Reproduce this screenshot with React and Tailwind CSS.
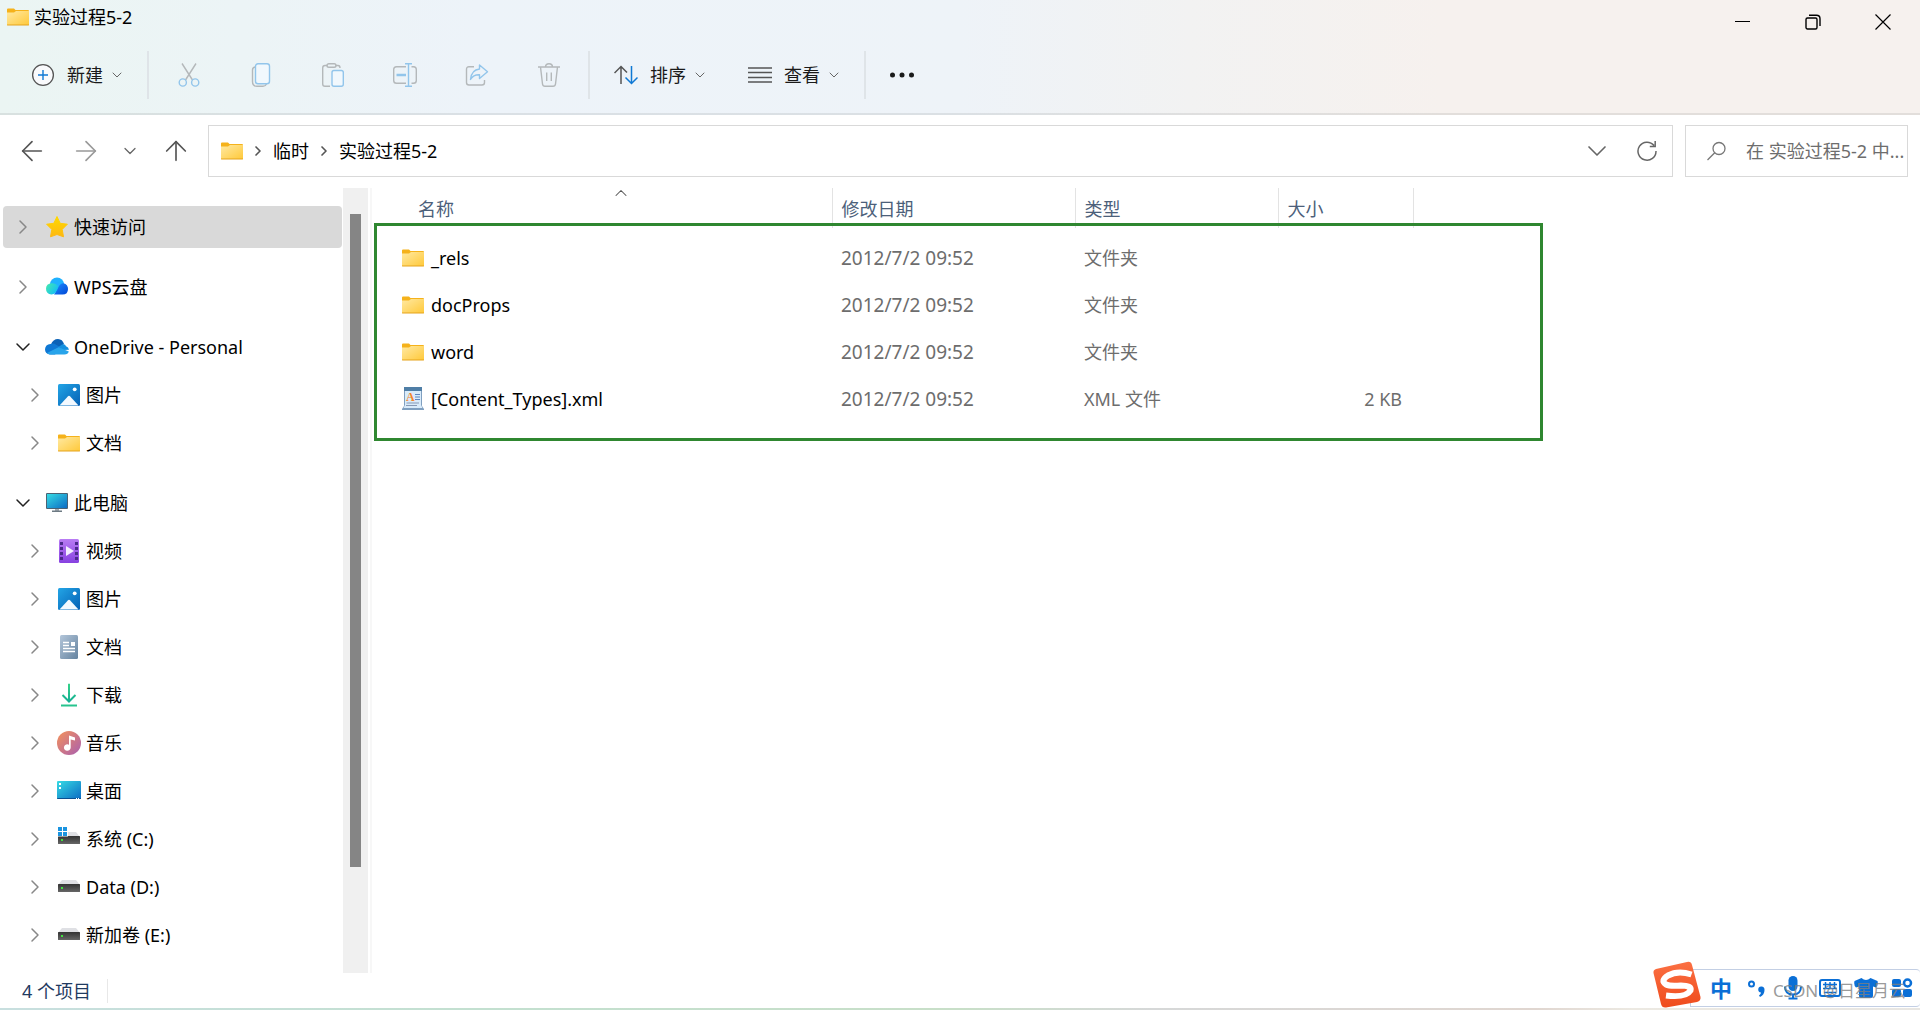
import React from 'react';
import { ChevronRight, ChevronDown, ChevronUp, ArrowLeft, ArrowRight, ArrowUp } from 'lucide-react';

const FolderIcon = () => (
  <svg className="w-[22px] h-[18px] shrink-0" viewBox="0 0 22 18">
    <defs>
      <linearGradient id="folder" x1="0" y1="0" x2="1" y2="1">
        <stop offset="0" stopColor="#ffe9a2" />
        <stop offset="1" stopColor="#ffc93a" />
      </linearGradient>
    </defs>
    <path d="M0 1.5Q0 .5 1 .5H7L8.5 2H21Q22 2 22 3V6H0Z" fill="#f5b21b" />
    <path d="M0 4.5H7L9 3H22V17H0Z" fill="url(#folder)" />
    <path d="M0 16.5H22V17Q22 17.5 21 17.5H1Q0 17.5 0 17Z" fill="#e5a41d" />
  </svg>
);

const StarIcon = () => (
  <svg className="w-6 h-6 shrink-0" viewBox="0 0 24 24">
    <defs>
      <linearGradient id="star" x1="0" y1="0" x2="0" y2="1">
        <stop offset="0" stopColor="#ffd900" />
        <stop offset="1" stopColor="#fdb813" />
      </linearGradient>
    </defs>
    <path
      d="M12 1.5L15.2 8.3L22.4 9.2L17.2 14.4L18.5 21.8L12 19.5L5.5 21.8L6.8 14.4L1.6 9.2L8.8 8.3Z"
      fill="url(#star)"
      stroke="url(#star)"
      strokeWidth="1"
      strokeLinejoin="round"
    />
  </svg>
);

const WpsCloudIcon = () => (
  <svg className="w-6 h-6 shrink-0" viewBox="0 0 24 24">
    <defs>
      <linearGradient id="wpsA" x1="0" y1="0.2" x2="1" y2="0.8">
        <stop offset="0" stopColor="#41e8b0" />
        <stop offset="1" stopColor="#0fb8ff" />
      </linearGradient>
      <linearGradient id="wpsB" x1="0" y1="0" x2="1" y2="1">
        <stop offset="0" stopColor="#1e8cff" />
        <stop offset="1" stopColor="#0047d6" />
      </linearGradient>
    </defs>
    <circle cx="12" cy="9.5" r="7" fill="#1fb1ff" />
    <path d="M9 19.5L14 11Q16 7.800 18.500 8.200Q23 9.200 23 14Q23 19.500 17.500 19.500Z" fill="url(#wpsB)" />
    <path d="M6.500 19.500Q1 19 1 13.800Q1 8.300 6.800 8.200Q11 8.300 13.500 11.500Q11 19.500 6.500 19.500Z" fill="url(#wpsA)" />
  </svg>
);

const OneDriveIcon = () => (
  <svg className="w-6 h-6 shrink-0" viewBox="0 0 24 24">
    <path d="M6 9.5Q8 4 13 4Q17.5 4.2 19 9L14 13Z" fill="#0b62b6" />
    <path d="M4.5 19.5Q0 18.5 0 14.3Q.3 9.5 5.5 9Q8.5 7.7 11.5 10L17 13L10 19.5Z" fill="#0f78d4" />
    <path d="M13 12.3L17 9.5Q20 8.3 21 11.3Q23.5 12 24 14.8L18.5 15Z" fill="#1490df" />
    <path d="M13.500 12.300L23.800 16.500Q23 19.500 19.500 19.500H5.500Q3 19.300 2 18Z" fill="#28a4ea" />
  </svg>
);

const PictureIcon = () => (
  <svg className="w-6 h-6 shrink-0" viewBox="0 0 24 24">
    <defs>
      <linearGradient id="pic" x1="0" y1="0" x2="1" y2="1">
        <stop offset="0" stopColor="#23a5e6" />
        <stop offset="1" stopColor="#0560b4" />
      </linearGradient>
    </defs>
    <rect x="1" y="1" width="22" height="22" rx="1.5" fill="url(#pic)" />
    <path d="M2.5 22.5L10.8 13.5Q12 12.2 13.2 13.5L21.5 22.5Z" fill="#f3f9ff" />
    <circle cx="17.7" cy="6.3" r="1.9" fill="#fff" />
  </svg>
);

const MonitorIcon = () => (
  <svg className="w-6 h-6 shrink-0" viewBox="0 0 24 24">
    <defs>
      <linearGradient id="screen" x1="0" y1="0" x2="1" y2="1">
        <stop offset="0" stopColor="#36dbe4" />
        <stop offset="1" stopColor="#0d6cc4" />
      </linearGradient>
    </defs>
    <rect x="1" y="2" width="22" height="16" rx="1" fill="#4b6274" />
    <rect x="2" y="3" width="20" height="14" fill="url(#screen)" />
    <path d="M10 18H14V20H10Z" fill="#a5abb0" />
    <rect x="7" y="19.5" width="10" height="1.5" fill="#6d7a83" />
  </svg>
);

const VideoIcon = () => (
  <svg className="w-6 h-6 shrink-0" viewBox="0 0 24 24">
    <defs>
      <linearGradient id="video" x1="0" y1="0" x2="0" y2="1">
        <stop offset="0" stopColor="#b97cf4" />
        <stop offset="1" stopColor="#8741e0" />
      </linearGradient>
    </defs>
    <rect x="2" y="0" width="20" height="24" rx="1.5" fill="url(#video)" />
    <path
      d="M3 3H6V6H3ZM3 8H6V11H3ZM3 13H6V16H3ZM3 18H6V21H3ZM18 3H21V6H18ZM18 8H21V11H18ZM18 13H21V16H18ZM18 18H21V21H18Z"
      fill="#4c2a8c"
    />
    <path d="M9 7L17 12L9 17Z" fill="#f4efff" />
  </svg>
);

const DocumentIcon = () => (
  <svg className="w-6 h-6 shrink-0" viewBox="0 0 24 24">
    <defs>
      <linearGradient id="doc" x1="0" y1="0" x2="1" y2="1">
        <stop offset="0" stopColor="#b3c6da" />
        <stop offset="1" stopColor="#65839f" />
      </linearGradient>
    </defs>
    <rect x="3" y="0" width="18" height="24" rx="1.5" fill="url(#doc)" />
    <path d="M6 7.5H12M6 10.5H12M6 13.5H18M6 16.5H18" stroke="#fff" strokeWidth="1.3" />
    <rect x="14" y="7" width="4" height="4" fill="#fff" />
  </svg>
);

const DownloadIcon = () => (
  <svg className="w-6 h-6 shrink-0" viewBox="0 0 24 24" fill="none">
    <defs>
      <linearGradient id="down" x1="0" y1="0" x2="0" y2="24" gradientUnits="userSpaceOnUse">
        <stop offset="0" stopColor="#36d488" />
        <stop offset="1" stopColor="#0ba597" />
      </linearGradient>
    </defs>
    <path d="M11.5 1H12.5V18H11.5Z" stroke="url(#down)" strokeWidth="1" fill="url(#down)" />
    <path d="M5.5 12L12 18.5L18.5 12" stroke="url(#down)" strokeWidth="2" />
    <path d="M4 22.5H20" stroke="#27c48e" strokeWidth="2" />
  </svg>
);

const MusicIcon = () => (
  <svg className="w-6 h-6 shrink-0" viewBox="0 0 24 24">
    <defs>
      <linearGradient id="music" x1="0" y1="0" x2="1" y2="1">
        <stop offset="0" stopColor="#f5925a" />
        <stop offset="1" stopColor="#a95fb0" />
      </linearGradient>
    </defs>
    <circle cx="12" cy="12" r="12" fill="url(#music)" />
    <path d="M12 4.5L18 6.5V9.5L13.7 8.5V16.5A3.4 3.2 0 1 1 12 13.8Z" fill="#fff" />
  </svg>
);

const DesktopIcon = () => (
  <svg className="w-6 h-6 shrink-0" viewBox="0 0 24 24">
    <rect x="0" y="2" width="24" height="18" rx="1" fill="url(#screen)" />
    <path d="M0 19H24V19.5Q24 20 23 20H1Q0 20 0 19Z" fill="#0b4f8f" />
    <path d="M2 4H4V6H2ZM2 8H4V10H2ZM19 19H20V20H19ZM21 19H22V20H21Z" fill="#fff" />
  </svg>
);

const DriveIcon = ({ system }) => (
  <svg className="w-6 h-6 shrink-0" viewBox="0 0 24 24">
    <defs>
      <linearGradient id="drive" x1="0" y1="0" x2="0" y2="1">
        <stop offset="0" stopColor="#333" />
        <stop offset="1" stopColor="#666" />
      </linearGradient>
    </defs>
    <path d="M5 5H19L23 10H1Z" fill="#dfe0e4" />
    <rect x="1" y="9" width="22" height="8" rx="0.5" fill="url(#drive)" />
    <rect x="4" y="12" width="2" height="2" fill="#3fe03f" />
    {system && (
      <>
        <path d="M0 0H11V9.5H0Z" fill="#fff" />
        <path d="M1 0H5V4H1ZM6 0H10V4H6ZM1 5H5V9H1ZM6 5H10V9H6Z" fill="#1a94e0" />
      </>
    )}
  </svg>
);

const XmlFileIcon = () => (
  <svg className="w-[22px] h-6 shrink-0" viewBox="0 0 22 24">
    <path d="M2 0H20V19L22 22V23H0V22L2 19Z" fill="#7f9fc0" />
    <path d="M3 4H19V18L20.5 21H1.5L3 18Z" fill="#d9ebfa" />
    <path d="M2 0H20V4H2Z" fill="#4f7ea6" />
    <path d="M13 7.5H18M13 10H18M13 12.5H18" stroke="#5f86c0" strokeWidth="1" />
    <path d="M4.5 16H17M4 18.5H15" stroke="#8799b5" strokeWidth="1" />
    <text x="4" y="14" className="text-[12px] font-bold font-['Liberation_Serif',serif]" fill="#f5862a">A</text>
  </svg>
);

const PlusCircleIcon = () => (
  <svg className="w-6 h-6" viewBox="0 0 24 24" fill="none">
    <circle cx="12" cy="12" r="10.4" fill="#f9fafc" stroke="#555" strokeWidth="1.3" />
    <path d="M12 7V17M7 12H17" stroke="#0f78d4" strokeWidth="1.4" />
  </svg>
);

const CutIcon = () => (
  <svg className="w-6 h-6" viewBox="0 0 24 24" fill="none" strokeWidth="1.4">
    <path d="M5 0.5L15.5 17M19 0.5L8.5 17" stroke="#b4b8ba" />
    <circle cx="5.8" cy="19.5" r="3.6" stroke="#92c5eb" />
    <circle cx="18.2" cy="19.5" r="3.6" stroke="#92c5eb" />
  </svg>
);

const CopyIcon = () => (
  <svg className="w-6 h-6" viewBox="0 0 24 24" fill="none" strokeWidth="1.4">
    <path d="M6 4Q3.5 4.5 3.5 7V18.5Q3.5 23.3 8 23.3H14Q16.5 23.3 17.5 21" stroke="#b4b8ba" />
    <rect x="6.5" y="0.7" width="14" height="20" rx="2.5" stroke="#92c5eb" fill="#f1f8fd" />
  </svg>
);

const PasteIcon = () => (
  <svg className="w-6 h-6" viewBox="0 0 24 24" fill="none" strokeWidth="1.4">
    <path d="M6.5 2.5H4Q1.7 2.5 1.7 5V21Q1.7 23.3 4 23.3H9M14.5 2.5H17Q19 2.5 19 5" stroke="#b4b8ba" />
    <rect x="6" y="0.7" width="9" height="3.6" rx="1.8" stroke="#b4b8ba" />
    <rect x="11" y="7.5" width="11.3" height="15.8" rx="2" stroke="#92c5eb" fill="#f1f8fd" />
  </svg>
);

const RenameIcon = () => (
  <svg className="w-6 h-6" viewBox="0 0 24 24" fill="none" strokeWidth="1.4">
    <path
      d="M13 3.7H3.5Q0.7 3.7 0.7 6.5V17.5Q0.7 20.3 3.5 20.3H13M18.5 3.7H20.5Q23.3 3.7 23.3 6.5V17.5Q23.3 20.3 20.5 20.3H18.5"
      stroke="#b4b8ba"
    />
    <path d="M12 0.7H19M12 23.3H19M15.5 0.7V23.3" stroke="#92c5eb" />
    <path d="M3.5 12H13" stroke="#92c5eb" strokeWidth="2.5" />
  </svg>
);

const ShareIcon = () => (
  <svg className="w-6 h-6" viewBox="0 0 24 24" fill="none" strokeWidth="1.4" strokeLinejoin="round">
    <path d="M9 3.7H4Q1.5 3.7 1.5 6.5V19.5Q1.5 22 4 22H17Q19.5 22 19.5 19.5V17" stroke="#b4b8ba" />
    <path d="M14.5 2L22.5 8.8L14.5 15.5V11.8Q8.5 11.5 5.5 16.5Q6.5 6.8 14.5 6Z" stroke="#92c5eb" />
  </svg>
);

const TrashIcon = () => (
  <svg className="w-6 h-6" viewBox="0 0 24 24" fill="none" stroke="#b4b8ba" strokeWidth="1.4">
    <path d="M1 4H23M8.5 4Q8.5 0.8 12 0.8Q15.5 0.8 15.5 4M3.5 4L5.5 21Q5.8 23.3 8 23.3H16Q18.2 23.3 18.5 21L20.5 4M9.7 9.5V18M14.3 9.5V18" />
  </svg>
);

const SortIcon = () => (
  <svg className="w-6 h-6" viewBox="0 0 24 24" fill="none" strokeWidth="1.5">
    <path d="M7 21V3.5M0.5 10L7 3.500L13 9.500" stroke="#555" />
    <path d="M17.5 3V20.5M11.5 14.5L17.5 20.5L23.5 14.5" stroke="#0f78d4" />
  </svg>
);

const ViewIcon = () => (
  <svg className="w-6 h-6" viewBox="0 0 24 24" stroke="#555" strokeWidth="1.3">
    <path d="M0 5H24M0 9.5H24M0 14.5H24M0 19H24" />
  </svg>
);

const RefreshIcon = () => (
  <svg className="w-5 h-5" viewBox="0 0 20 20" fill="none" stroke="#666" strokeWidth="1.5">
    <path d="M17 4.5A9 9 0 1 0 19 10M18.2 0V5.5H12.8" />
  </svg>
);

const SearchIcon = () => (
  <svg className="w-5 h-5 shrink-0" viewBox="0 0 20 20" fill="none" stroke="#777" strokeWidth="1.3">
    <circle cx="13" cy="7.500" r="6" />
    <path d="M8.700 11.800L1.500 19" />
  </svg>
);

const SogouLogo = () => (
  <svg className="w-12 h-12 shrink-0" viewBox="0 0 48 48">
    <defs>
      <linearGradient id="sogou" x1="0" y1="0" x2="0" y2="1">
        <stop offset="0" stopColor="#fb7043" />
        <stop offset="1" stopColor="#ef4b1c" />
      </linearGradient>
    </defs>
    <path d="M3 8L34 1Q38 0 39 4L47.5 36Q48 40 44 41L13 46.5Q9 47 8 43L.5 12Q0 9 3 8Z" fill="url(#sogou)" />
    <path
      d="M38.500 13.500Q25 9 15 14.500Q7 19.500 13 23.500Q17 25.500 28 24.500Q39 24.500 37.500 29.500Q33 37 13 34.500"
      stroke="#fff"
      strokeWidth="6"
      fill="none"
    />
  </svg>
);

const PunctuationIcon = () => (
  <svg className="w-6 h-6" viewBox="0 0 24 24">
    <circle cx="6.5" cy="8" r="2.5" fill="none" stroke="#0b6fd6" strokeWidth="2" />
    <path
      d="M16.500 10.500A3 3 0 0 1 19.500 14Q19.500 19 15 21L14 19.500Q16 18 16 16.500A3 3 0 0 1 16.500 10.500Z"
      fill="#0b6fd6"
    />
  </svg>
);

const MicIcon = () => (
  <svg className="w-6 h-6" viewBox="0 0 24 24">
    <rect x="7.5" y="0" width="9" height="15" rx="4.5" fill="#0b6fd6" />
    <path d="M4 10.5Q4 18.5 12 18.5Q20 18.5 20 10.5M12 18V22.5M7.5 22.5H16.5" fill="none" stroke="#0b6fd6" strokeWidth="2" />
  </svg>
);

const KeyboardIcon = () => (
  <svg className="w-6 h-6" viewBox="0 0 24 24" fill="none" stroke="#0b6fd6" strokeWidth="2">
    <rect x="2" y="4" width="20" height="16" rx="2" />
    <path d="M5 8.500H19M5 12.500H19" strokeWidth="1.500" />
    <path d="M6 16.500H18M7.500 6V13M12 6V13M16.500 6V13" strokeWidth="1.500" />
  </svg>
);

const ShirtIcon = () => (
  <svg className="w-6 h-6" viewBox="0 0 24 24">
    <path d="M7.5 2Q12 6 16.5 2L23.5 5Q24.5 9 22 11.5L19 10.5V20Q19 22 17 22H7Q5 22 5 20V10.5L2 11.5Q-.5 9 .5 5Z" fill="#0b6fd6" />
  </svg>
);

const ToolboxIcon = () => (
  <svg className="w-6 h-6" viewBox="0 0 24 24" fill="#0b6fd6">
    <rect x="2" y="3" width="9" height="8" rx="2" />
    <circle cx="17.5" cy="7" r="3.5" fill="none" stroke="#0b6fd6" strokeWidth="2.5" />
    <rect x="2" y="13" width="9" height="8" rx="2" />
    <rect x="13" y="13" width="9" height="8" rx="2" />
  </svg>
);

const navGroups = [
  [{ label: '快速访问', icon: <StarIcon />, selected: true }],
  [{ label: 'WPS云盘', icon: <WpsCloudIcon /> }],
  [
    { label: 'OneDrive - Personal', icon: <OneDriveIcon />, open: true },
    { label: '图片', icon: <PictureIcon />, child: true },
    { label: '文档', icon: <FolderIcon />, child: true },
  ],
  [
    { label: '此电脑', icon: <MonitorIcon />, open: true },
    { label: '视频', icon: <VideoIcon />, child: true },
    { label: '图片', icon: <PictureIcon />, child: true },
    { label: '文档', icon: <DocumentIcon />, child: true },
    { label: '下载', icon: <DownloadIcon />, child: true },
    { label: '音乐', icon: <MusicIcon />, child: true },
    { label: '桌面', icon: <DesktopIcon />, child: true },
    { label: '系统 (C:)', icon: <DriveIcon system />, child: true },
    { label: 'Data (D:)', icon: <DriveIcon />, child: true },
    { label: '新加卷 (E:)', icon: <DriveIcon />, child: true },
  ],
];

const files = [
  { name: '_rels', icon: <FolderIcon />, date: '2012/7/2 09:52', type: '文件夹', size: '' },
  { name: 'docProps', icon: <FolderIcon />, date: '2012/7/2 09:52', type: '文件夹', size: '' },
  { name: 'word', icon: <FolderIcon />, date: '2012/7/2 09:52', type: '文件夹', size: '' },
  { name: '[Content_Types].xml', icon: <XmlFileIcon />, date: '2012/7/2 09:52', type: 'XML 文件', size: '2 KB' },
];

const editActions = [
  { label: '剪切', icon: <CutIcon /> },
  { label: '复制', icon: <CopyIcon /> },
  { label: '粘贴', icon: <PasteIcon /> },
  { label: '重命名', icon: <RenameIcon /> },
  { label: '共享', icon: <ShareIcon /> },
  { label: '删除', icon: <TrashIcon /> },
];

const MenuButton = ({ icon, label }) => (
  <button className="flex items-center text-[#1a1a1a]">
    {icon}
    <span className="ml-3 mr-1.5">{label}</span>
    <ChevronDown className="w-4 h-4 text-[#666]" strokeWidth={1.5} />
  </button>
);

const Divider = () => <div className="w-0.5 h-12 bg-[#dfe4e8]" />;

const NavItem = ({ item }) => (
  <li className="h-12 flex items-center pl-[3px] pr-px">
    <a
      href="#"
      className={`flex-1 h-[42px] flex items-center rounded-sm ${item.selected ? 'bg-[#d9d9d9]' : ''} ${item.child ? 'pl-5' : 'pl-2'}`}
    >
      {item.open ? (
        <ChevronDown className="w-6 h-6 text-[#222]" strokeWidth={1.5} />
      ) : (
        <ChevronRight className="w-6 h-6 text-[#888]" strokeWidth={1.5} />
      )}
      <span className="w-6 ml-2.5 mr-[5px] flex justify-center">{item.icon}</span>
      <span>{item.label}</span>
    </a>
  </li>
);

const App = () => {
  return (
    <div className="min-h-screen flex flex-col bg-white text-black text-[18px] leading-6 font-['Noto_Sans','Noto_Sans_CJK_SC',sans-serif]">
      {/* Title bar and toolbar */}
      <header className="bg-[linear-gradient(to_right,#ebf5f3,#edf3f9_25%,#eef3f8_50%,#f2f2f2_62%,#f6f1ee_75%,#f6f1ee)] border-b-2 border-black/8">
        <div className="h-9 flex items-center justify-between pr-0.5">
          <div className="flex items-center gap-[5px] pl-[7px] pb-0.5">
            <FolderIcon />
            <h1>实验过程5-2</h1>
          </div>
          <div className="flex">
            <button aria-label="最小化" className="w-[70px] h-9 pt-[7px] flex items-center justify-center">
              <svg className="w-4 h-4" viewBox="0 0 16 16"><path d="M0 7.5H15" stroke="#000" /></svg>
            </button>
            <button aria-label="还原" className="w-[70px] h-9 pt-[7px] flex items-center justify-center">
              <svg className="w-4 h-4" viewBox="0 0 16 16" fill="none" stroke="#000" strokeWidth="1.4">
                <rect x="1" y="4" width="11" height="11" rx="1.5" />
                <path d="M4 1.2H11.5Q15 1.2 15 4.7V12" />
              </svg>
            </button>
            <button aria-label="关闭" className="w-[70px] h-9 pt-[7px] flex items-center justify-center">
              <svg className="w-4 h-4" viewBox="0 0 16 16" stroke="#000" strokeWidth="1.2">
                <path d="M0.5 0.5L15.5 15.5M15.5 0.5L0.5 15.5" />
              </svg>
            </button>
          </div>
        </div>
        <div className="h-[77px] flex items-center pl-[31px]">
          <MenuButton icon={<PlusCircleIcon />} label="新建" />
          <div className="ml-[22px] mr-1"><Divider /></div>
          {editActions.map((action) => (
            <button key={action.label} aria-label={action.label} disabled className="w-[72px] h-12 flex items-center justify-center">
              {action.icon}
            </button>
          ))}
          <div className="ml-[3px] mr-6"><Divider /></div>
          <div className="flex gap-10">
            <MenuButton icon={<SortIcon />} label="排序" />
            <MenuButton icon={<ViewIcon />} label="查看" />
          </div>
          <div className="ml-[22px] mr-6"><Divider /></div>
          <button aria-label="更多">
            <svg className="w-6 h-6" viewBox="0 0 24 24" fill="#1a1a1a">
              <circle cx="2.5" cy="12" r="2.5" />
              <circle cx="12" cy="12" r="2.5" />
              <circle cx="21.5" cy="12" r="2.5" />
            </svg>
          </button>
        </div>
      </header>

      {/* Address bar */}
      <div className="flex items-center py-2.5 pr-3">
        <nav className="w-[208px] flex items-center pl-4">
          <button aria-label="后退"><ArrowLeft className="w-8 h-8 text-[#555]" strokeWidth={1.25} /></button>
          <button aria-label="前进" className="ml-[22px]"><ArrowRight className="w-8 h-8 text-[#999]" strokeWidth={1.25} /></button>
          <button aria-label="最近浏览的位置" className="ml-[18px]"><ChevronDown className="w-5 h-5 text-[#666]" strokeWidth={1.5} /></button>
          <button aria-label="上移" className="ml-5"><ArrowUp className="w-8 h-8 text-[#555]" strokeWidth={1.25} /></button>
        </nav>
        <div className="flex-1 h-[52px] flex items-center border border-[#d9d9d9] pl-3 pr-[15px]">
          <FolderIcon />
          <ChevronRight className="w-4 h-4 text-[#555] mx-[7px]" strokeWidth={2.5} />
          <a href="#">临时</a>
          <ChevronRight className="w-4 h-4 text-[#555] mx-[7px]" strokeWidth={2.5} />
          <a href="#">实验过程5-2</a>
          <button aria-label="历史记录" className="ml-auto mr-6"><ChevronDown className="w-8 h-8 text-[#666]" strokeWidth={1.25} /></button>
          <button aria-label="刷新"><RefreshIcon /></button>
        </div>
        <label className="w-[223px] h-[52px] ml-3 flex items-center border border-[#d9d9d9] pl-5">
          <SearchIcon />
          <input
            type="text"
            aria-label="搜索"
            placeholder="在 实验过程5-2 中..."
            className="min-w-0 flex-1 ml-5 outline-none placeholder:text-[#6d6d6d]"
          />
        </label>
      </div>

      {/* Sidebar and file list */}
      <div className="flex-1 flex pt-px">
        <aside className="w-[343px] pt-[15px] pb-[14px]">
          <ul className="flex flex-col">
            {navGroups.map((group, i) => (
              <React.Fragment key={i}>
                {i > 0 && <li className="h-3" aria-hidden="true" />}
                {group.map((item) => (
                  <NavItem key={item.label} item={item} />
                ))}
              </React.Fragment>
            ))}
          </ul>
        </aside>
        <div className="w-[25px] bg-[#f0f0f0] flex flex-col items-center pt-[26px] pb-[106px]">
          <div className="w-[11px] flex-1 bg-[#858585]" />
        </div>
        <div className="w-0.5 ml-0.5 bg-[#f7f7f7]" />

        <main className="flex-1 relative">
          <table className="table-fixed border-collapse text-left">
            <colgroup>
              <col className="w-[460px]" />
              <col className="w-[243px]" />
              <col className="w-[203px]" />
              <col className="w-[135px]" />
            </colgroup>
            <thead>
              <tr className="h-10 text-[#4c607a]">
                <th className="relative font-normal pl-[46px] pt-0.5 border-r border-[#e3e3e3]">
                  名称
                  <ChevronUp className="absolute top-[-5px] left-[239px] w-5 h-5 text-[#555]" strokeWidth={1.25} />
                </th>
                <th className="font-normal pl-[9px] pt-0.5 border-r border-[#e3e3e3]">修改日期</th>
                <th className="font-normal pl-[9px] pt-0.5 border-r border-[#e3e3e3]">类型</th>
                <th className="font-normal pl-[9px] pt-0.5 border-r border-[#e3e3e3]">大小</th>
              </tr>
            </thead>
            <tbody>
              <tr className="h-1.5"><td colSpan={4} /></tr>
              {files.map((file) => (
                <tr key={file.name} className="h-[47px] text-[#6d6d6d]">
                  <td className="pl-[30px]">
                    <div className="flex items-center gap-[7px] text-black">
                      {file.icon}
                      <span>{file.name}</span>
                    </div>
                  </td>
                  <td className="pl-[9px] text-[19px]">{file.date}</td>
                  <td className="pl-[9px]">{file.type}</td>
                  <td className="pr-[11px] text-right">{file.size}</td>
                </tr>
              ))}
            </tbody>
          </table>
          {/* Highlight frame drawn over the list */}
          <div className="absolute top-[35px] left-[2px] w-[1169px] h-[218px] border-3 border-[#2f8730] pointer-events-none" />
        </main>
      </div>

      {/* Status bar */}
      <footer className="relative h-[35px] flex items-center pl-[22px] text-[#1f3a5f]">
        <span className="pr-4 border-r border-[#e8e8e8]">4 个项目</span>
        <div className="absolute right-0 bottom-px flex items-center">
          <div className="h-[38px] w-[230px] flex items-center justify-between pl-[18px] pr-1.5 bg-white border border-r-0 border-[#c3cfe4] rounded-r-sm">
            <button className="w-6 text-[22px] font-bold text-[#0b6fd6]">中</button>
            <button aria-label="中文标点"><PunctuationIcon /></button>
            <button aria-label="语音"><MicIcon /></button>
            <button aria-label="软键盘"><KeyboardIcon /></button>
            <button aria-label="皮肤"><ShirtIcon /></button>
            <button aria-label="工具箱"><ToolboxIcon /></button>
          </div>
          <div className="absolute -left-[37px] -bottom-0.5"><SogouLogo /></div>
          <span className="absolute right-3.5 bottom-1 text-[17px] text-[#808080]/80 whitespace-nowrap">CSDN @日星月云</span>
        </div>
      </footer>
      <div className="h-0.5 bg-[linear-gradient(to_right,#c8dfdf,#c3e0d0_25%,#c8dfc8_50%,#d6d8d8_60%,#e0d6d0_80%,#ece9e2_85%,#e8e6e2)]" />
    </div>
  );
};

export default App;
